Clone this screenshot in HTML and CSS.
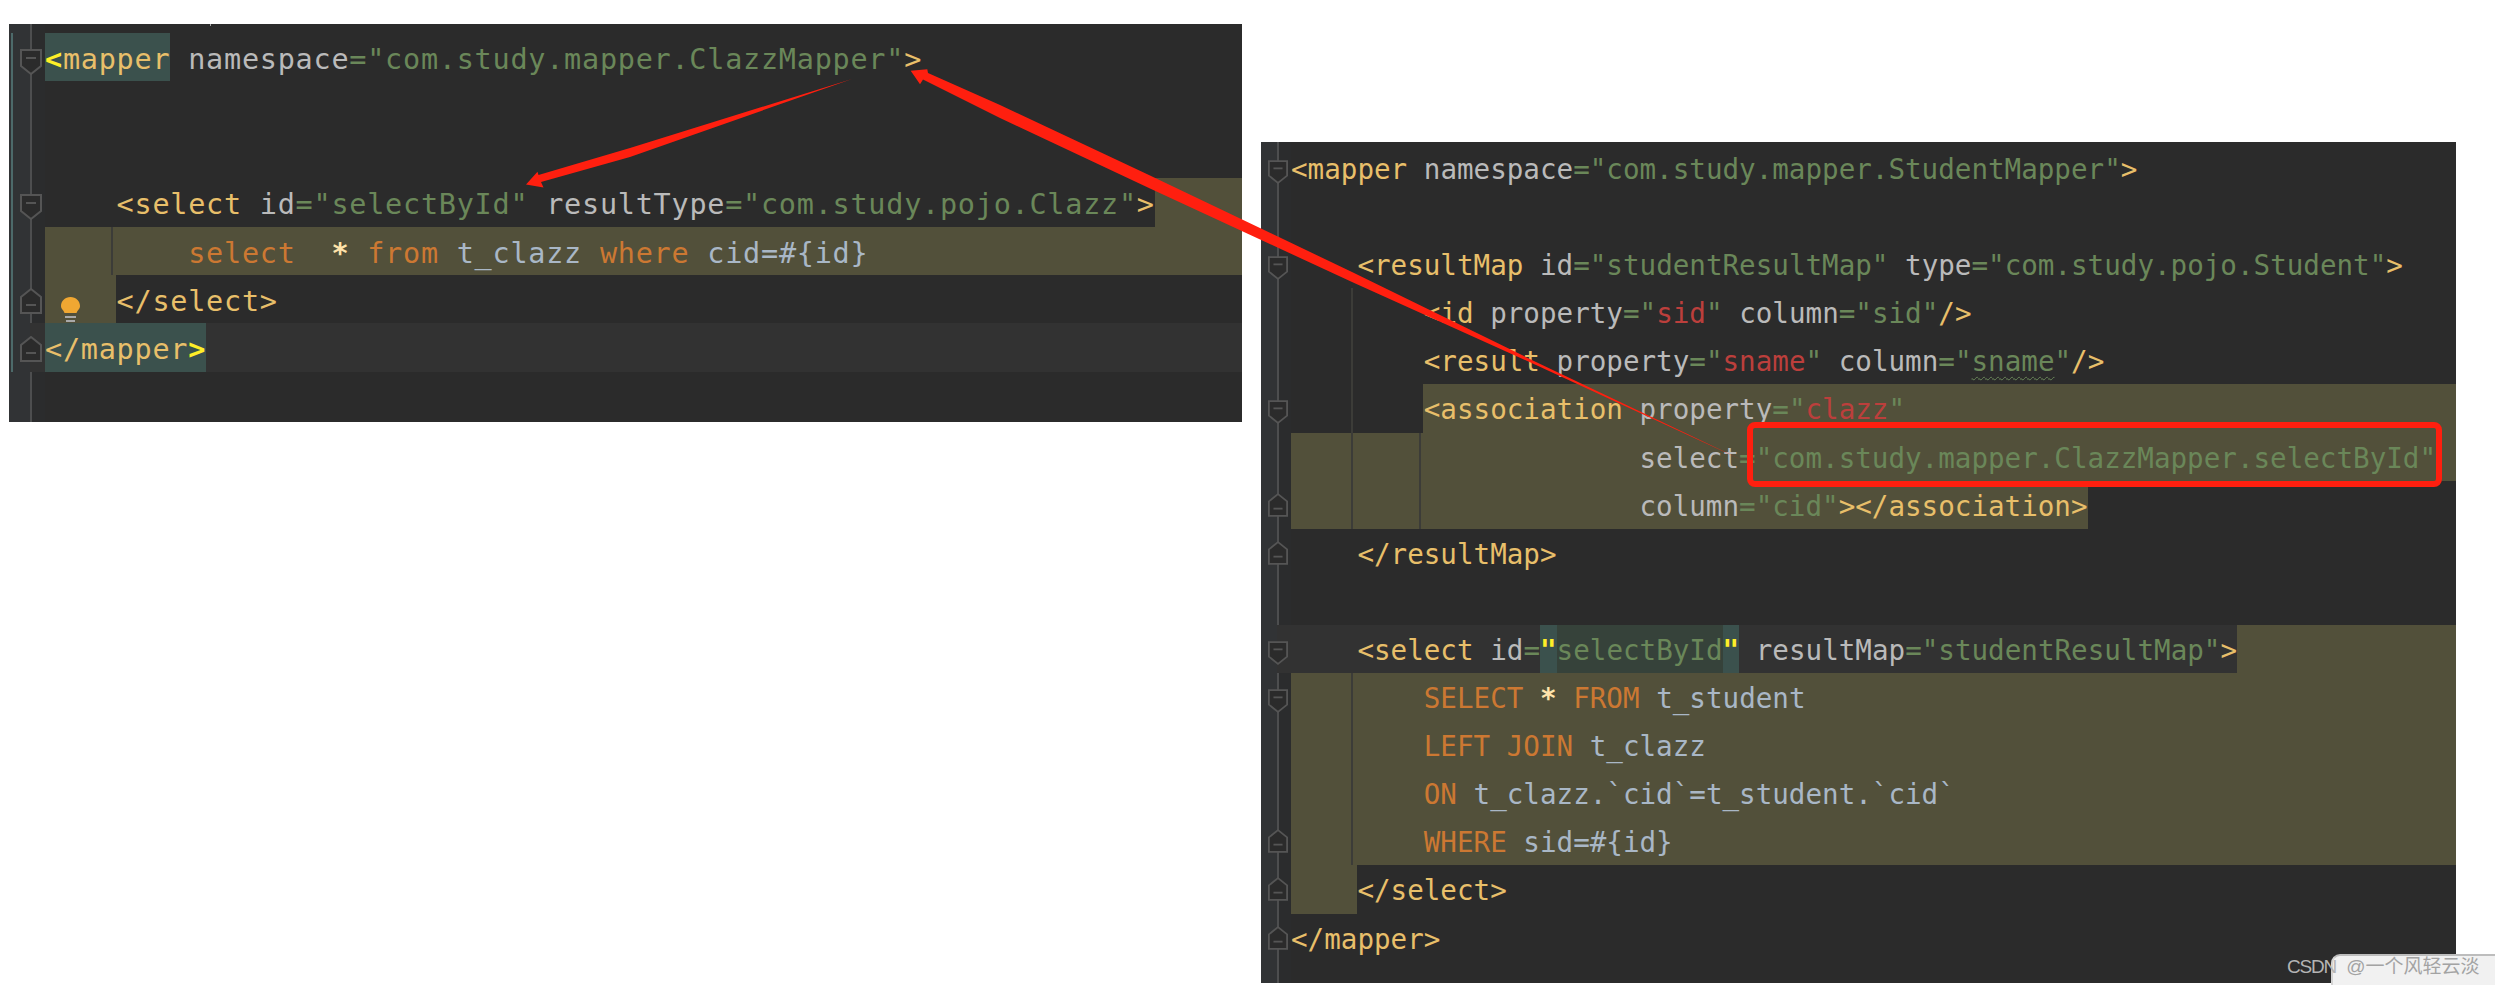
FILE: index.html
```html
<!DOCTYPE html>
<html lang="en">
<head>
<meta charset="utf-8">
<title>Mapper XML</title>
<link rel="stylesheet" href="styles.css">
</head>
<body>
<svg width="0" height="0" class="defs">
  <defs>
    <symbol id="fold-down" viewBox="0 0 22 26"><path d="M1 1H21V17L11 25L1 17Z" fill="#2b2b2b" stroke="#555" stroke-width="2"/><path d="M6 9H16" fill="none" stroke="#555" stroke-width="2"/></symbol>
    <symbol id="fold-up" viewBox="0 0 22 26"><path d="M1 25H21V9L11 1L1 9Z" fill="#2b2b2b" stroke="#555" stroke-width="2"/><path d="M6 17H16" fill="none" stroke="#555" stroke-width="2"/></symbol>
  </defs>
</svg>

<section class="editor left">
  <span class="change-bar"></span>
  <span class="tick"></span>
  <div class="row"><div class="gutter"><svg class="fold down"><use href="#fold-down"/></svg></div><div class="code"><span class="match"><b class="y">&lt;</b><i class="t">mapper</i></span> <i class="a">namespace</i><i class="s">="com.study.mapper.ClazzMapper"</i><i class="t">&gt;</i></div></div>
  <div class="row"><div class="gutter"></div><div class="code"></div></div>
  <div class="row"><div class="gutter"></div><div class="code"></div></div>
  <div class="row"><div class="gutter"><svg class="fold down"><use href="#fold-down"/></svg></div><div class="code band-after"><span class="plain">    <i class="t">&lt;select</i> <i class="a">id</i><i class="s">="selectById"</i> <i class="a">resultType</i><i class="s">="com.study.pojo.Clazz"</i><i class="t">&gt;</i></span></div></div>
  <div class="row"><div class="gutter"></div><div class="code band"><span class="guide g-left"></span>    <i class="k">    select</i>  <i class="y2">*</i> <i class="k">from</i> <i class="v">t_clazz</i> <i class="k">where</i> <i class="v">cid=#{id}</i></div></div>
  <div class="row"><div class="gutter"><svg class="fold up"><use href="#fold-up"/></svg></div><div class="code"><span class="stub stub-left"></span><svg class="bulb" viewBox="0 0 19 26"><path d="M9.500 0C15 0 19 4 19 9C19 12 16.500 13 15.500 16H3.500C2.500 13 0 12 0 9C0 4 4 0 9.500 0Z" fill="#f0a732"/><path d="M4 20H15M5 24H14" stroke="#a9a9a9" stroke-width="2"/></svg>    <i class="t">&lt;/select&gt;</i></div></div>
  <div class="row caret"><div class="gutter"><svg class="fold up"><use href="#fold-up"/></svg></div><div class="code"><span class="match"><i class="t">&lt;/mapper</i><b class="y">&gt;</b></span></div></div>
</section>

<section class="editor right">
  <div class="row"><div class="gutter"><svg class="fold down"><use href="#fold-down"/></svg></div><div class="code"><i class="t">&lt;mapper</i> <i class="a">namespace</i><i class="s">="com.study.mapper.StudentMapper"</i><i class="t">&gt;</i></div></div>
  <div class="row"><div class="gutter"></div><div class="code"></div></div>
  <div class="row"><div class="gutter"><svg class="fold down"><use href="#fold-down"/></svg></div><div class="code">    <i class="t">&lt;resultMap</i> <i class="a">id</i><i class="s">="studentResultMap"</i> <i class="a">type</i><i class="s">="com.study.pojo.Student"</i><i class="t">&gt;</i></div></div>
  <div class="row"><div class="gutter"></div><div class="code"><span class="guide g-a"></span>        <i class="t">&lt;id</i> <i class="a">property</i><i class="s">="</i><i class="r">sid</i><i class="s">"</i> <i class="a">column</i><i class="s">="sid"</i><i class="t">/&gt;</i></div></div>
  <div class="row"><div class="gutter"></div><div class="code"><span class="guide g-a"></span>        <i class="t">&lt;result</i> <i class="a">property</i><i class="s">="</i><i class="r">sname</i><i class="s">"</i> <i class="a">column</i><i class="s">="<u class="wavy">sname</u>"</i><i class="t">/&gt;</i></div></div>
  <div class="row"><div class="gutter"><svg class="fold down"><use href="#fold-down"/></svg></div><div class="code band-indent"><span class="guide g-a"></span><span class="plain">        </span><i class="t">&lt;association</i> <i class="a">property</i><i class="s">="</i><i class="r">clazz</i><i class="s">"</i></div></div>
  <div class="row"><div class="gutter"></div><div class="code band"><span class="guide g-a"></span><span class="guide g-b"></span>                     <i class="a">select</i><i class="s">="com.study.mapper.ClazzMapper.selectById"</i></div></div>
  <div class="row"><div class="gutter"><svg class="fold up"><use href="#fold-up"/></svg></div><div class="code"><span class="band inline-band"><span class="guide g-a"></span><span class="guide g-b"></span>                     <i class="a">column</i><i class="s">="cid"</i><i class="t">&gt;&lt;/association&gt;</i></span></div></div>
  <div class="row"><div class="gutter"><svg class="fold up"><use href="#fold-up"/></svg></div><div class="code">    <i class="t">&lt;/resultMap&gt;</i></div></div>
  <div class="row"><div class="gutter"></div><div class="code"></div></div>
  <div class="row caret"><div class="gutter"><svg class="fold down"><use href="#fold-down"/></svg></div><div class="code band-after"><span class="plain caret-bg">    <i class="t">&lt;select</i> <i class="a">id</i><i class="s">=</i><b class="y match">"</b><span class="match-soft"><i class="s">selectById</i></span><b class="y match">"</b> <i class="a">resultMap</i><i class="s">="studentResultMap"</i><i class="t">&gt;</i></span></div></div>
  <div class="row"><div class="gutter"><svg class="fold down"><use href="#fold-down"/></svg></div><div class="code band"><span class="guide g-a"></span>        <i class="k">SELECT</i> <i class="y2">*</i> <i class="k">FROM</i> <i class="v">t_student</i></div></div>
  <div class="row"><div class="gutter"></div><div class="code band"><span class="guide g-a"></span>        <i class="k">LEFT JOIN</i> <i class="v">t_clazz</i></div></div>
  <div class="row"><div class="gutter"></div><div class="code band"><span class="guide g-a"></span>        <i class="k">ON</i> <i class="v">t_clazz.`cid`=t_student.`cid`</i></div></div>
  <div class="row"><div class="gutter"><svg class="fold up"><use href="#fold-up"/></svg></div><div class="code band"><span class="guide g-a"></span>        <i class="k">WHERE</i> <i class="v">sid=#{id}</i></div></div>
  <div class="row"><div class="gutter"><svg class="fold up"><use href="#fold-up"/></svg></div><div class="code"><span class="stub stub-right"></span>    <i class="t">&lt;/select&gt;</i></div></div>
  <div class="row"><div class="gutter"><svg class="fold up"><use href="#fold-up"/></svg></div><div class="code"><i class="t">&lt;/mapper&gt;</i></div></div>
</section>

<svg class="arrows" viewBox="0 0 2495 985">
  <rect x="1750" y="425" width="689" height="59" rx="5" fill="none" stroke="#ff1f0f" stroke-width="6"/>
  <polygon fill="#ff1f0f" points="852,79 630,148 538.500,175 537.500,171.700 526,184.500 543.500,187.500 541,182 630,157"/>
  <polygon fill="#ff1f0f" points="1742,460 1536,362 1352,272 1150,175.500 1000,105 928,73 927.300,69.300 910.700,70.700 920,84.300 923,79.500 1000,118 1150,188.500 1352,282 1536,365"/>
</svg>

<div class="watermark-box"></div>
<div class="watermark"><span class="wm-brand">CSDN</span> @一个风轻云淡</div>
</body>
</html>
```
FILE: styles.css
```css
* { box-sizing: border-box; }
html, body { margin: 0; padding: 0; background: #fff; }
body { position: relative; width: 2495px; height: 985px; overflow: hidden; }
.defs { position: absolute; }
i, b { font-style: normal; font-weight: normal; }
b.y { font-weight: bold; }

.editor {
  position: absolute;
  background: #2b2b2b;
  font-family: "DejaVu Sans Mono", monospace;
  overflow: hidden;
}
.left {
  left: 9px; top: 24px; width: 1233px; height: 398px; padding-top: 9px;
  font-size: 28.5px; letter-spacing: 0.74px;
  --gw: 36px; --row: 48.4px; --fold: 22px; --rail: 22px; --line: 21px;
  --shift: 6px; --down: 16px; --up: 13px;
}
.right {
  left: 1261px; top: 142px; width: 1195px; height: 841px; padding-top: 2px;
  font-size: 27.57px;
  --gw: 30px; --row: 48.1px; --fold: 20px; --rail: 17px; --line: 16px;
  --shift: 4px; --down: 15px; --up: 11px;
}

/* gutter rails run the full height of each panel */
.editor::before {
  content: "";
  position: absolute;
  top: 0; bottom: 0; left: 0;
  width: var(--gw);
  background: linear-gradient(90deg, #313335 0, #313335 var(--rail), #2b2c2d var(--rail));
}
.editor::after {
  content: "";
  position: absolute;
  top: 0; bottom: 0;
  left: var(--line);
  width: 2px;
  background: #4d4e4f;
}
.change-bar {
  position: absolute;
  left: 2px; top: 9px;
  width: 2px; height: 339px;
  background: #4d6a6a;
  z-index: 1;
}
.tick {
  position: absolute;
  left: 201px; top: 0;
  width: 1px; height: 2px;
  background: #a9a9a9;
}

.row {
  position: relative;
  z-index: 1;
  display: flex;
  height: var(--row);
  line-height: calc(var(--row) + var(--shift));
}
.gutter {
  flex: none;
  width: var(--gw);
  position: relative;
  z-index: 2;
}
.fold {
  position: absolute;
  left: calc(var(--line) + 1px - var(--fold) / 2);
  width: var(--fold);
  height: 26px;
}
.fold.down { top: var(--down); }
.fold.up { top: var(--up); }
.code {
  flex: 1;
  position: relative;
  white-space: pre;
  color: #a9b7c6;
}

.caret .code, .caret-bg { background-color: #323232; }
.caret .gutter { background: linear-gradient(90deg, transparent var(--line), #323232 var(--line)); }
.band { background: #52503a; }
.code.band-after { background: #52503a; }
.band-after .plain { display: inline-block; height: 100%; background: #2b2b2b; }
.band-after .caret-bg { background: #323232; }
.band-indent { background: linear-gradient(90deg, transparent 132px, #52503a 132px); }
.inline-band { display: inline-block; height: 100%; position: relative; }

.match { display: inline-block; height: 100%; background: #3b514d; }
.match-soft { display: inline-block; height: 100%; background: #36423a; }

.t { color: #e8bf6a; }
.a { color: #bababa; }
.s { color: #6a8759; }
.r { color: #bc3f3c; }
.k { color: #cc7832; }
.v { color: #a9b7c6; }
.y { color: #ffef28; }
.y2 { color: #ffe3ab; font-weight: bold; }
.wavy { text-decoration: underline wavy #6a8759 1px; text-underline-offset: 5px; }

.guide { position: absolute; top: 0; bottom: 0; width: 2px; background: #3c3c38; }
.g-left { left: 66px; }
.g-a { left: 60px; }
.g-b { left: 128px; }

.stub { position: absolute; left: 0; top: 0; bottom: 0; background: #52503a; }
.stub-left { width: 71px; }
.stub-right { width: 66px; }
.bulb { position: absolute; left: 16px; top: 22px; width: 19px; height: 26px; }

.arrows { position: absolute; left: 0; top: 0; width: 2495px; height: 985px; z-index: 5; pointer-events: none; }

.watermark-box {
  position: absolute;
  left: 2331px; top: 954px;
  width: 164px; height: 31px;
  z-index: 6;
  background: #f1f1f1;
  border-top: 2px solid #bdbdbd;
  border-left: 2px solid #d4d4d4;
  border-top-left-radius: 9px;
}
.watermark {
  position: absolute;
  left: 2287px; top: 952px;
  z-index: 7;
  font: 19px/30px "Liberation Sans", "Noto Sans CJK SC", sans-serif;
  word-spacing: 5px;
  color: #a3a3a3;
  white-space: nowrap;
}
.wm-brand { letter-spacing: -1.2px; color: #b4b4b4; }
```
